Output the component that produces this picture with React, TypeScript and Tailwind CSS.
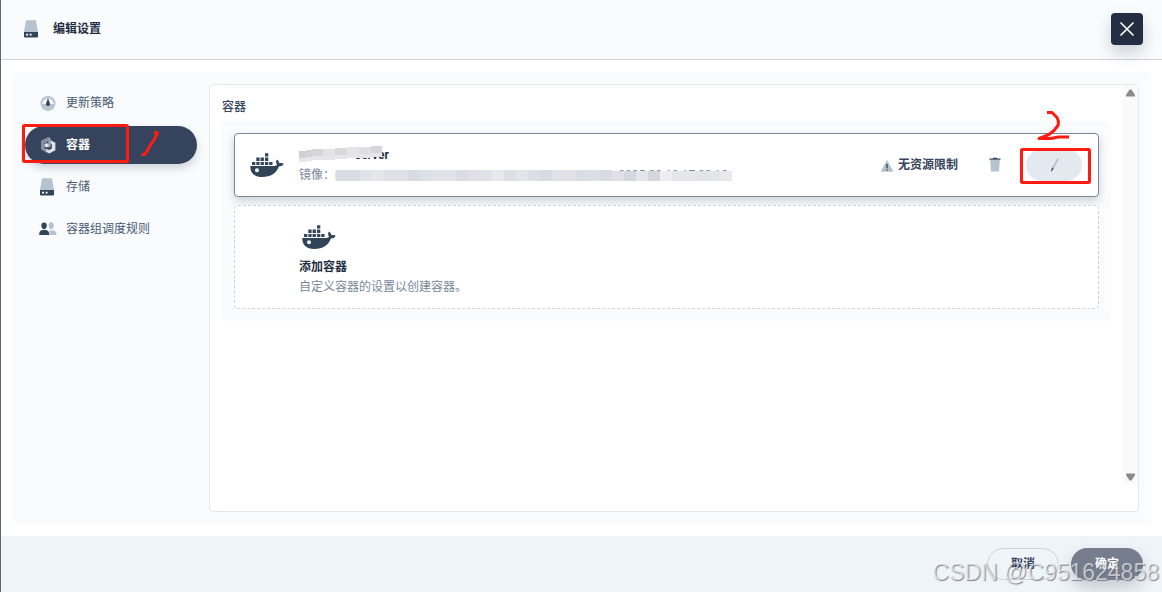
import { useState } from 'react';
import type { ReactNode } from 'react';

function StorageIcon() {
  return (
    <svg className="w-5 h-5 shrink-0" viewBox="0 0 20 20" aria-hidden="true">
      <path d="M5 1.2h10l2 11.8H3z" fill="#b6c2cd" />
      <path d="M3 13h14v4.2a1.2 1.2 0 0 1-1.2 1.2H4.2A1.2 1.2 0 0 1 3 17.2z" fill="#324558" />
      <path d="M5 14.8h2v1.8H5zM8.6 14.8h2v1.8h-2z" fill="#fff" />
    </svg>
  );
}

function StrategyIcon() {
  return (
    <svg className="w-5 h-5 shrink-0" viewBox="0 0 20 20" aria-hidden="true">
      <circle cx="11" cy="10.500" r="7.500" fill="#b6c2cd" />
      <path d="M5.200 11a5.800 5.800 0 1 1 11.600 0z" fill="#f4f6f9" />
      <path d="M11 5l1.900 5.400a2 2 0 1 1-3.800 0z" fill="#324558" />
    </svg>
  );
}

function ContainerIcon() {
  return (
    <svg className="w-5 h-5 shrink-0" viewBox="0 0 20 20" aria-hidden="true">
      <path d="M11.300 2L4 5.800v8.800l5.600 3.200 1.700-2.800-4-2.300V8.400l4-2z" fill="#868fa2" />
      <path d="M11.300 2l2.300 1.300v8.200l-2.300 1.300z" fill="#a3aaba" />
      <path d="M13.600 5.200l4.800 2.600v7.400l-6 3.200-3-1.500v-3.100l2.600 1.200 2.800-1.600V9l-1.200-.6z" fill="#dfe3e9" />
      <path d="M7.400 9.200l2.200-1.200 2 1.100v2.300l-2 1.200-2.200-1.200z" fill="#dfe3e9" />
    </svg>
  );
}

function GroupIcon() {
  return (
    <svg className="w-5 h-5 shrink-0" viewBox="0 0 20 20" aria-hidden="true">
      <path d="M11.800 7a2.600 3 0 1 1 5 0c0 1.900-1.100 3.300-2.500 3.300S11.800 8.900 11.800 7z" fill="#b6c2cd" />
      <path d="M12.400 11.400h4.200c1.600.7 2.800 1.500 2.800 3.500v1.200h-7.200z" fill="#b6c2cd" />
      <path d="M4.400 6.600a2.700 3.100 0 1 1 5.400 0c0 2-1.200 3.700-2.700 3.700S4.400 8.600 4.400 6.600z" fill="#324558" />
      <path d="M5.200 11.100h3.900c1.700.7 3 1.600 3 3.800v1.200H2.200v-1.200c0-2.200 1.300-3.100 3-3.800z" fill="#324558" />
    </svg>
  );
}

function DockerIcon() {
  return (
    <svg className="w-[34px] h-[25px] shrink-0" viewBox="0 0 34 25" fill="#324558" aria-hidden="true">
      <path d="M15 .2h3.300v3.300H15zM6.300 4.600h3.300v3.300H6.300zM10.600 4.600h3.300v3.300h-3.300zM15 4.600h3.300v3.300H15z" />
      <path d="M2 9h3.300v3H2zM6.300 9h3.300v3H6.300zM10.600 9h3.300v3h-3.300zM15 9h3.300v3H15zM19.200 9h3.300v3h-3.300z" />
      <path
        fillRule="evenodd"
        d="M.3 13h24.100c1.200 0 2.200-.5 2.600-1.200-1.100-1.700-1.200-3.800-.1-5.400 1.500.9 2.300 2.200 2.500 3.800 1.500-.4 3-.2 4.300.5-.8 1.800-2.500 2.800-4.800 2.800C26.600 20 20.800 24 12.300 24 4.300 24 0 19.800.3 13zM7 15.300a2 2 0 1 0 0 4 2 2 0 0 0 0-4z"
      />
    </svg>
  );
}

function WarningIcon() {
  return (
    <svg className="w-3.5 h-3.5 mt-0.5" viewBox="0 0 14 14" aria-hidden="true">
      <path d="M7 1l6.500 11.800H.5z" fill="#b6c2cd" />
      <path d="M6.300 5h1.400v4.200H6.300zM6.300 10.200h1.400v1.400H6.300z" fill="#324558" />
    </svg>
  );
}

function TrashIcon() {
  return (
    <svg className="w-3.5 h-4" viewBox="0 0 14 16" aria-hidden="true">
      <path d="M2.200 3h9.600l-.8 11.500H3z" fill="#b6c2cd" />
      <path d="M1.500 1.600H5V.8h4v.8h3.500v1.200h-11z" fill="#324558" />
    </svg>
  );
}

function PencilIcon() {
  return (
    <svg className="w-4 h-4" viewBox="0 0 16 16" aria-hidden="true">
      <path d="M11.500 1.200l1.500.9-5.200 9.400-1.900-1z" fill="#b6c2cd" />
      <path d="M5.900 10.500l1.900 1-2.200 3-.7-.4z" fill="#4a5a6c" />
    </svg>
  );
}

const nameTiles = [
  { x: 0, y: 5, w: 7, color: '#cfcfd4' },
  { x: 7, y: 4, w: 6, color: '#d3d3d8' },
  { x: 13, y: 3, w: 11, color: '#d6d6db' },
  { x: 24, y: 3, w: 12, color: '#e3e3e8' },
  { x: 36, y: 2, w: 12, color: '#d8d8dd' },
  { x: 48, y: 1, w: 12, color: '#e4e4e9' },
  { x: 60, y: 1, w: 12, color: '#dedee3' },
  { x: 72, y: 0, w: 11, color: '#d5d5da' },
];

const imageTiles = [
  '#d9dce4', '#d8dce5', '#e1e3e8', '#e6e7eb', '#dfe1e6', '#dfe1e6', '#d8dbe4', '#dce0e7',
  '#e1e3e8', '#e1e3e8', '#dadde5', '#dfe1e7', '#dfe2e6', '#e8e9ed', '#dcdfe5', '#e2e5ea',
  '#dcdfe4', '#d8dbe3', '#dfe2e7', '#e0e2e8', '#d9dde4', '#dcdfe7', '#d8dbe3', '#dfe1e7',
  '#d4d8e1', '#e5e5ea', '#d3d8e0', '#eeeef2', '#e5e6ea', '#e4e6e9', '#e0e4e8', '#e3e6e9', '#e8e8ed',
];

interface NavItem {
  key: string;
  label: string;
  icon: ReactNode;
}

const navItems: NavItem[] = [
  { key: 'strategy', label: '更新策略', icon: <StrategyIcon /> },
  { key: 'container', label: '容器', icon: <ContainerIcon /> },
  { key: 'storage', label: '存储', icon: <StorageIcon /> },
  { key: 'group', label: '容器组调度规则', icon: <GroupIcon /> },
];

function SideNav() {
  const [active, setActive] = useState('container');

  return (
    <nav className="relative w-43 shrink-0 flex flex-col gap-1">
      {navItems.map((item) => (
        <button
          key={item.key}
          type="button"
          onClick={() => setActive(item.key)}
          className={
            item.key === active
              ? 'h-[38px] px-3 flex items-center gap-[9px] rounded-full bg-[#36435c] text-white font-bold shadow-[0_4px_8px_rgba(36,46,66,0.2)]'
              : 'h-[38px] px-3 flex items-center gap-[9px] rounded-full text-[#4a5974]'
          }
        >
          {item.icon}
          {item.label}
        </button>
      ))}

      {/* Step 1 marker */}
      <svg className="absolute -left-1 top-9 w-36 h-12 pointer-events-none" viewBox="0 0 144 48" fill="none" stroke="#fe1b12" strokeWidth="3">
        <rect x="2.500" y="5.500" width="104" height="36" rx="1" />
        <path d="M133 12l3.500 1-3 6-4 6-4 7-2 2.500h-3" strokeLinejoin="round" />
      </svg>
    </nav>
  );
}

function ContainerCard() {
  return (
    <div className="flex items-center h-16 pl-[15px] pr-4 rounded-sm border border-[#79879c] bg-white shadow-[0_4px_8px_rgba(36,46,66,0.2)]">
      <DockerIcon />
      <div className="ml-[15px] leading-5">
        <div className="relative w-[90px] text-right font-bold text-[#242e42]">
          server
          <svg className="absolute left-0 top-px w-[84px] h-4" viewBox="0 0 84 16" shapeRendering="crispEdges" aria-hidden="true">
            {nameTiles.map((tile) => (
              <g key={tile.x}>
                <rect x={tile.x} y={tile.y} width={tile.w} height="11" fill={tile.color} />
                <rect x={tile.x} y={tile.y + 7} width={tile.w} height="4" fill="#e6e6ea" />
              </g>
            ))}
          </svg>
        </div>
        <div className="relative w-[433px] flex justify-between text-[#79879c]">
          <span>镜像：r</span>
          <span className="pr-1">2025-02-10 17:22:10</span>
          <svg className="absolute left-[37px] top-[5px] w-[396px] h-[11px]" viewBox="0 0 396 11" shapeRendering="crispEdges" aria-hidden="true">
            {imageTiles.map((color, i) => (
              <rect key={i} x={i * 12} y={i > 22 ? 1 : 0} width="12" height={i > 22 ? 10 : 11} fill={color} />
            ))}
          </svg>
        </div>
      </div>

      <div className="ml-auto flex items-center">
        <WarningIcon />
        <span className="ml-1 font-bold text-[#36435c]">无资源限制</span>
        <button type="button" aria-label="删除" className="ml-[30px] flex">
          <TrashIcon />
        </button>
        <div className="relative ml-6">
          <button type="button" aria-label="编辑" className="w-14 h-8 flex items-center justify-center rounded-full bg-[#e3e9ef]">
            <PencilIcon />
          </button>

          {/* Step 2 marker */}
          <svg className="absolute -left-2 -top-10 w-20 h-20 pointer-events-none" viewBox="0 0 80 80" fill="none" stroke="#fe1b12" strokeWidth="3">
            <rect x="3.500" y="40.500" width="68" height="33" rx="1" />
            <path d="M29 3.500h5l5 5 1.500 4-.5 4-4 5-5 4-6 2.500-4 1.500h12l7-1.500h11" strokeLinejoin="round" />
          </svg>
        </div>
      </div>
    </div>
  );
}

function AddContainer() {
  return (
    <button
      type="button"
      className="h-26 pl-16 pt-[7px] flex flex-col items-start justify-center rounded-sm border border-dashed border-[#ccd3db] bg-white text-left leading-5"
    >
      <span className="ml-[3px] mb-[7px]">
        <DockerIcon />
      </span>
      <span className="font-bold text-[#242e42]">添加容器</span>
      <span className="text-[#79879c]">自定义容器的设置以创建容器。</span>
    </button>
  );
}

function ScrollBar() {
  return (
    <div className="w-[15px] mb-[26px] py-1 flex flex-col items-center justify-between bg-[#fafafa]">
      <svg className="w-[9px] h-2" viewBox="0 0 9 8" fill="#8b8b8b" aria-hidden="true">
        <path d="M3.500.5h2L9 6v1.500H0V6z" />
      </svg>
      <svg className="w-[9px] h-2" viewBox="0 0 9 8" fill="#8b8b8b" aria-hidden="true">
        <path d="M3.500 7.500h2L9 2V.5H0V2z" />
      </svg>
    </div>
  );
}

export default function App() {
  return (
    <div className="relative min-h-screen flex flex-col overflow-hidden border-l border-[#5d677f] bg-white text-xs font-[Roboto,'Noto_Sans_CJK_SC',sans-serif]">
      <header className="h-15 pl-5 pr-[19px] pb-0.5 flex items-center gap-3 border-b border-[#ccd3db] bg-[#f9fbfd]">
        <StorageIcon />
        <h1 className="font-bold text-[#242e42]">编辑设置</h1>
        <button
          type="button"
          aria-label="关闭"
          className="ml-auto w-8 h-8 flex items-center justify-center rounded-sm bg-[#242e42] shadow-[0_8px_16px_rgba(36,46,66,0.2)]"
        >
          <svg className="w-4 h-4" viewBox="0 0 16 16" stroke="#fff" strokeWidth="1.600" aria-hidden="true">
            <path d="M1.500 1.500l13 13M14.500 1.500l-13 13" />
          </svg>
        </button>
      </header>

      <main className="flex-1 flex pl-3 pr-[11px] py-3">
        <div className="flex-1 flex gap-3 p-3 rounded-sm bg-[#f9fbfd]">
          <SideNav />
          <section className="flex-1 flex rounded-sm border border-[#e3e9ef] bg-white">
            <div className="flex-1 p-3">
              <h2 className="leading-5 text-[#36435c] font-medium">容器</h2>
              <div className="mt-1 p-3 flex flex-col gap-2 rounded-sm bg-[#f9fbfd]">
                <ContainerCard />
                <AddContainer />
              </div>
            </div>
            <ScrollBar />
          </section>
        </div>
      </main>

      <footer className="h-14 pr-[19px] flex items-center justify-end gap-3 bg-[#eff4f9]">
        <button type="button" className="w-18 h-8 rounded-full border border-[#ccd3db] font-bold text-[#36435c]">
          取消
        </button>
        <button type="button" className="w-18 h-8 rounded-full bg-[#767e8e] font-bold text-white shadow-[0_8px_16px_rgba(36,46,66,0.2)]">
          确定
        </button>
      </footer>

      <span className="absolute right-[3px] bottom-[6px] text-[23px] leading-7 text-white/60 [text-shadow:1px_1px_1px_rgba(90,96,106,0.7)] font-['Liberation_Sans',sans-serif] pointer-events-none">
        CSDN @C951624858
      </span>
    </div>
  );
}
